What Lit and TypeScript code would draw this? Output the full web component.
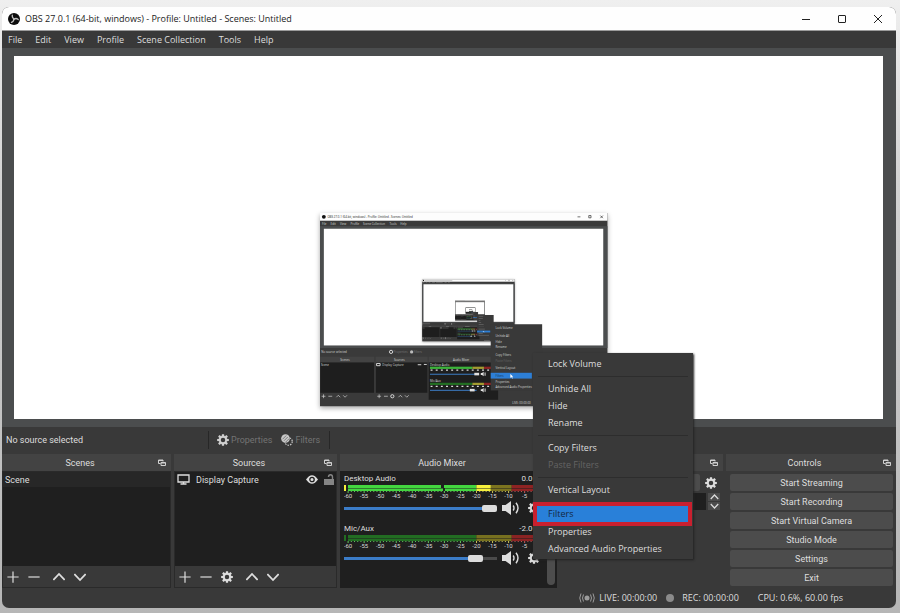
import { LitElement, html, svg, css, nothing } from "lit";
import { customElement } from "lit/decorators.js";

const gearTeeth = [0, 45, 90, 135, 180, 225, 270, 315];

const gear = (cls = "icon") => html`<svg class=${cls} viewBox="0 0 16 16" aria-hidden="true">
  <circle cx="8" cy="8" r="4.3" fill="none" stroke="currentColor" stroke-width="2.6" />
  ${gearTeeth.map((a) => svg`<path d="M6.2 3 L6.6 0.2 H9.4 L9.8 3 Z" fill="currentColor" transform="rotate(${a} 8 8)" />`)}
</svg>`;

const line = (d: string, w = 1.6) => html`<svg class="icon" viewBox="0 0 16 16" aria-hidden="true">
  <path d=${d} fill="none" stroke="currentColor" stroke-width=${w} />
</svg>`;

const plus = () => line("M8 0.5V15.5M0.5 8H15.5");
const minus = () => line("M0.5 8H15.5");
const up = () => line("M0.5 12L8 4L15.5 12", 2.4);
const down = () => line("M0.5 4L8 12L15.5 4", 2.4);

const popout = () => html`<svg class="pop" viewBox="0 0 8 8" aria-hidden="true">
  <path d="M0.5 4.5V1H5V2.5M0.5 1.5H5M0.5 4.5H2.5" fill="none" stroke="currentColor" />
  <path d="M3 3.5H7.5V6.5H3ZM3 4H7.5" fill="none" stroke="currentColor" />
</svg>`;

const speaker = () => html`<svg class="speaker" viewBox="0 0 18 14" aria-hidden="true">
  <path d="M0 4H3.5L9 0V14L3.5 10H0Z" fill="currentColor" />
  <path d="M11.2 4.5Q12.8 7 11.2 9.5M14 1.8Q18 7 14 12.2" fill="none" stroke="currentColor" stroke-width="1.4" />
</svg>`;

const logo = () => html`<svg class="logo" viewBox="0 0 24 24" aria-hidden="true">
  <circle cx="12" cy="12" r="12" fill="#0c0c0c" />
  ${[0, 120, 240].map(
    (a) => svg`<path d="M12.500 11.500C9.500 10.500 8 8 8.600 4.200" fill="none" stroke="#bdbdbd" stroke-width="2.600" stroke-linecap="round" transform="rotate(${a} 12 12)" />`
  )}
</svg>`;

/* Level meter: -60 dB sits 4px in, the scale runs to 0 dB. */
const dbX = (db: number) => 4 + (db + 60) * 3.21;
const meter = (live: boolean) => {
  const [g, y, r] = live ? ["#43d63f", "#f6f03c", "#8e2323"] : ["#226d22", "#77701f", "#8a2323"];
  const parts = live
    ? [[4, dbX(-20), g], [dbX(-20), dbX(-15.5), y], [dbX(-15.5), dbX(-9), "#7c741f"], [dbX(-9), dbX(0), r]]
    : [[4, dbX(-20), g], [dbX(-20), dbX(-9), y], [dbX(-9), dbX(0), r]];
  const ticks = Array.from({ length: 61 }, (_, i) => i);
  return html`<svg class="meter" viewBox="0 0 200 14" aria-hidden="true">
    ${parts.map(([a, b, c]) => svg`
      <rect x=${a} y="0" width=${(b as number) - (a as number)} height="3" fill=${c} />
      <rect x=${a} y="3.500" width=${(b as number) - (a as number)} height="2.500" fill=${c} />`)}
    <rect x="0" y="0" width="2" height="6" fill=${live ? "#f6f03c" : g} />
    ${live ? svg`<rect x="97" y="0" width="3" height="3" fill="#1f1f1f" /><rect x="99" y="3" width="2" height="3" fill="#1f1f1f" />` : nothing}
    ${ticks.map((i) => svg`<rect x=${dbX(i - 60) - 0.4} y="6" width="1" height=${i % 5 ? 1 : 2} fill=${i < 40 ? "#62c35f" : i < 51 ? "#c9c35a" : "#c25a5a"} />`)}
    ${ticks.filter((i) => i % 5 === 0).map((i) => svg`<text class="db" x=${dbX(i - 60)} y="13" text-anchor="middle">${i - 60}</text>`)}
  </svg>`;
};

const S = 0.3215;
const menuRows: [string, number][] = [
  ["Lock Volume", 368], ["Unhide All", 392], ["Hide", 410], ["Rename", 427], ["Copy Filters", 451],
  ["Paste Filters", 469], ["Vertical Layout", 493], ["Filters", 517], ["Properties", 535], ["Advanced Audio Properties", 552],
];

/* The captured display shows the same window again inside its own preview. */
const capture = (depth: number): unknown => {
  const label = (s: string, x: number, y: number, c = "#d6d6d6", w = s.length * 4) =>
    depth === 0
      ? svg`<text class="tiny" x=${x} y=${y} fill=${c}>${s}</text>`
      : svg`<rect x=${x} y=${y - 6} width=${w} height="4" fill=${c} opacity="0.5" />`;
  return svg`<g transform="translate(${320 - 2 * S} ${213 - 7 * S}) scale(${S})">
    <rect class="cast" x="2" y="7" width="894" height="601" fill="#3a3a3a" />
    <rect x="2" y="7" width="894" height="24" fill="#fdfdfd" />
    <circle cx="14" cy="19" r="6" fill="#111" />
    ${label("OBS 27.0.1 (64-bit, windows) - Profile: Untitled - Scenes: Untitled", 25, 23, "#222")}
    <path d="M803 19H812M838 15H845V22H838ZM874 15L882 23M882 15L874 23" stroke="#222" stroke-width="2" fill="none" />
    ${[["File", 8], ["Edit", 35], ["View", 64], ["Profile", 97], ["Scene Collection", 136], ["Tools", 218], ["Help", 252]].map(([s, x]) => label(s as string, x as number, 43))}
    <rect x="2" y="48" width="894" height="379" fill="#4b4d4e" />
    <rect x="14" y="56" width="869" height="363" fill="#fff" />
    ${label("No source selected", 6, 443)}
    ${label("Properties", 231, 443, "#777")}${label("Filters", 294, 443, "#777")}
    <circle cx="223" cy="439" r="5" fill="none" stroke="#ddd" stroke-width="3" />
    <circle cx="287" cy="439" r="5" fill="#bbb" />
    <path d="M2 454H171V471H2ZM175 454H337V471H175ZM340 454H556V471H340Z" fill="#434343" />
    ${label("Scenes", 65, 467)}${label("Sources", 232, 467)}${label("Audio Mixer", 416, 467)}
    <path d="M3 472H170V566H3ZM176 472H336V566H176ZM340 472H556V588H340Z" fill="#1e1e1e" />
    ${label("Scene", 5, 483)}${label("Display Capture", 196, 483)}
    <path d="M178 475H189V482H178ZM306 479H317M325 478H334" stroke="#ddd" stroke-width="3" fill="none" />
    <path d="M7 577H19M13 571V583M28 577H40M53 580L59 574L65 580M74 574L80 580L86 574M180 577H192M186 571V583M201 577H213M246 580L252 574L258 580M266 574L272 580L278 574" stroke="#ddd" stroke-width="2" fill="none" />
    <circle cx="227" cy="577" r="5" fill="none" stroke="#ddd" stroke-width="3" />
    ${label("Desktop Audio", 344, 482)}${label("Mic/Aux", 344, 532)}
    ${[0, 50].map((o) => svg`
      <rect x="344" y=${485 + o} width="132" height="7" fill=${o ? "#226d22" : "#3cb43a"} />
      <rect x="476" y=${485 + o} width="36" height="7" fill="#a39b30" />
      <rect x="512" y=${485 + o} width="28" height="7" fill="#8e2323" />
      <path d="M346 ${496 + o}H535" stroke="#ddd" stroke-width="4" stroke-dasharray="6 10" />
      <rect x="344" y=${507 + o} width="145" height="3" fill="#3d7fc9" />
      <rect x=${o ? 468 : 482} y=${504 + o} width="15" height="8" fill="#e2e2e2" />
      <path d="M502 ${505 + o}H506L511 ${501 + o}V${515 + o}L506 ${511 + o}H502ZM514 ${503 + o}H517V${513 + o}H514Z" fill="#e2e2e2" />`)}
    <path d="M730 474H893V491H730ZM730 493H893V510H730ZM730 512H893V529H730ZM730 531H893V548H730ZM730 550H893V567H730ZM730 569H893V586H730Z" fill="#4b4b4b" />
    ${label("LIVE: 00:00:00", 600, 602)}
    ${depth < 4 ? capture(depth + 1) : nothing}
    <rect x="533" y="353" width="160" height="206" fill="#393939" />
    <rect x="533" y="504" width="128" height="18" fill="#2d7fd6" />
    ${menuRows.map(([s, y]) => label(s, 548, y, s === "Paste Filters" ? "#666" : s === "Filters" ? "#16324f" : "#d6d6d6"))}
    <path d="M594 508V520L597 517L600 522L602 521L599 516H603Z" fill="#fff" />
  </g>`;
};

@customElement("app-root")
export class AppRoot extends LitElement {
  static styles = css`
    :host { display: block; min-height: 100vh; box-sizing: border-box; padding: 7px 4px 5px 2px;
      background: linear-gradient(#efefef, #d2d2d2 30%, #b6b6b6);
      font-family: "Open Sans", "Noto Sans", sans-serif; font-size: 9px; line-height: 12px; color: #dedede; }
    * { box-sizing: border-box; }
    button, input, select { font: inherit; color: inherit; border: 0; padding: 0; margin: 0; background: none; }
    svg { display: block; flex: none; }
    ul { list-style: none; margin: 0; padding: 0; }
    h2 { margin: 0; font: inherit; }
    .window { position: relative; display: flex; flex-direction: column; min-height: calc(100vh - 12px);
      background: #393939; border-radius: 7px; }
    .titlebar { display: flex; align-items: center; height: 24px; padding: 0 13px 0 6px; background: #fefefe; color: #1b1b1b;
      border-radius: 7px 7px 0 0; border-bottom: 1px solid #9c9c9c; }
    .logo { width: 12px; height: 12px; margin-right: 5px; }
    .title { flex: 1; }
    .caption { display: flex; gap: 26px; }
    .caption button, .caption svg { width: 10px; height: 10px; }
    .menubar { display: flex; gap: 13px; height: 17px; padding: 0 6px; align-items: center; }
    .preview { flex: 1; display: flex; padding: 8px 13px 8px 12px; background: #4b4d4e; }
    .canvas { flex: 1; min-height: 0; background: #fff; }
    .canvas svg { width: 100%; height: 100%; }
    .tiny { font-size: 9px; }
    .cast { filter: drop-shadow(0 6px 8px rgba(0, 0, 0, 0.35)); }
    .context, .docks { font-family: Roboto, "Open Sans", sans-serif; }
    .context { display: flex; align-items: center; height: 27px; padding: 0 4px 2px; }
    .context .status { width: 202px; }
    .tools { display: flex; gap: 9px; align-items: center; height: 18px; padding: 0 9px 0 8px;
      border: solid #272727; border-width: 0 1px; }
    .tools button { display: flex; align-items: center; gap: 2px; color: #737373; }
    .icon { width: 12px; height: 12px; }
    .tools .icon { color: #d0d0d0; }
    .docks { display: grid; grid-template-columns: 169fr 163fr 217fr 163fr 170fr; gap: 3px; }
    .dock { display: flex; flex-direction: column; min-width: 0; }
    .head { display: flex; align-items: center; height: 17px; padding: 0 5px 0 0; background: #434343; }
    .head h2 { flex: 1; text-align: center; }
    .pop { width: 8px; height: 8px; color: #d0d0d0; }
    .body { flex: 1; display: flex; flex-direction: column; min-height: 117px; }
    .framed { border: 1px solid #2a2a2a; }
    .list { flex: 1; background: #1f1f1f; }
    .list li { display: flex; align-items: center; height: 15px; padding: 0 2px; }
    .picked { background: #272727; }
    .source { gap: 6px; }
    .source span { flex: 1; }
    .monitor { width: 13px; height: 11px; }
    .eye { width: 12px; height: 9px; }
    .lock { width: 10px; height: 11px; color: #858585; }
    .foot { display: flex; align-items: center; gap: 9px; height: 21px; padding: 0 4px; }
    .foot button { width: 12px; height: 12px; }
    .foot .gap { margin-left: 4px; }
    .mixer { flex-direction: row; background: #1f1f1f; padding: 2px 2px 0 4px; }
    .strips { flex: 1; display: flex; flex-direction: column; gap: 3px; min-width: 0; }
    .strip { height: 47px; }
    .names { display: flex; justify-content: space-between; width: 200px; font-size: 8px; line-height: 12px; }
    .meter { width: 200px; height: 14px; }
    .db { font-size: 6px; fill: #d8d8d8; }
    .fader { display: flex; align-items: center; height: 18px; }
    .fader input { flex: none; appearance: none; width: 153px; height: 8px; margin-right: 5px;
      background: linear-gradient(90deg, #3b7cc8 var(--level), #4a4a4a var(--level)) center / 100% 3px no-repeat; }
    .fader input::-webkit-slider-thumb { appearance: none; width: 15px; height: 7px; border-radius: 2px; background: #dcdcdc; }
    .fader button { flex: none; }
    .fader button + button { margin-left: 8px; }
    .speaker { width: 18px; height: 14px; }
    .bar { width: 8px; border-radius: 4px; margin: 0 0 3px; background: #4d4d4d; }
    .transitions { padding: 3px; gap: 2px; }
    .trow { display: flex; gap: 5px; align-items: center; height: 17px; }
    .pick { padding-right: 3px; }
    .trow select { flex: 1; min-width: 0; height: 17px; background: #4c4c4c; border-radius: 2px; appearance: none; }
    .trow label { width: 48px; }
    .trow input { flex: 1; min-width: 0; height: 17px; background: #1f1f1f; }
    .spin { display: flex; flex-direction: column; gap: 1px; margin-left: -3px; }
    .spin button { display: flex; justify-content: center; width: 12px; height: 8px; background: #4c4c4c; }
    .spin svg { width: 9px; height: 8px; }
    .controls { padding: 3px 3px 2px 4px; gap: 2px; }
    .controls button { height: 17px; background: #4c4c4c; border-radius: 2px; }
    .statusbar { display: flex; justify-content: flex-end; align-items: center; height: 20px; padding-right: 53px; }
    .statusbar span { display: flex; align-items: center; margin-left: 19px; }
    .statusbar .rec { margin-left: 9px; }
    .live { width: 16px; height: 10px; margin-right: 4px; color: #9c9c9c; }
    .dot { width: 8px; height: 8px; margin-right: 8px; border-radius: 50%; background: #8b8b8b; }
    .popup { position: absolute; left: 531px; top: 346px; width: 160px; padding: 2px 0; background: #393939;
      box-shadow: 1px 1px 2px #222; }
    .popup button { display: block; width: 100%; height: 17px; padding: 0 15px; text-align: left; }
    .popup hr { height: 1px; margin: 4px 5px 3px; border: 0; background: #2d2d2d; }
    .popup button:disabled { color: #646464; }
    .popup .hot { width: calc(100% - 9px); height: 16px; margin: 0 5px 1px 4px; padding: 0 11px; background: #2980d9;
      color: #14283f; outline: 4px solid #c9202f; }
  `;

  private dock(title: string, body: unknown) {
    return html`<section class="dock">
      <header class="head"><h2>${title}</h2>${popout()}</header>
      ${body}
    </section>`;
  }

  private strip(name: string, db: string, live: boolean, level: number) {
    return html`<div class="strip">
      <div class="names"><span>${name}</span><span>${db}</span></div>
      ${meter(live)}
      <div class="fader">
        <input type="range" min="0" max="100" .value=${String(level)} aria-label="${name} volume" style="--level:${level}%" />
        <button aria-label="Mute ${name}">${speaker()}</button>
        <button aria-label="${name} settings">${gear()}</button>
      </div>
    </div>`;
  }

  render() {
    return html`<main class="window">
      <header class="titlebar">
        ${logo()}<span class="title">OBS 27.0.1 (64-bit, windows) - Profile: Untitled - Scenes: Untitled</span>
        <div class="caption">
          <button aria-label="Minimize"><svg viewBox="0 0 10 10"><path d="M1 5.500H9" stroke="#222" /></svg></button>
          <button aria-label="Maximize"><svg viewBox="0 0 10 10"><rect x="1.500" y="1.500" width="7" height="7" rx="0.500" fill="none" stroke="#222" /></svg></button>
          <button aria-label="Close"><svg viewBox="0 0 10 10"><path d="M1 1L9 9M9 1L1 9" stroke="#222" /></svg></button>
        </div>
      </header>
      <nav class="menubar">
        ${["File", "Edit", "View", "Profile", "Scene Collection", "Tools", "Help"].map((m) => html`<button>${m}</button>`)}
      </nav>
      <div class="preview"><div class="canvas">
        <svg viewBox="14 56 869 363" aria-hidden="true">${capture(0)}</svg>
      </div></div>
      <div class="context">
        <span class="status">No source selected</span>
        <div class="tools">
          <button>${gear()}Properties</button>
          <button><svg class="icon" viewBox="0 0 16 16" aria-hidden="true">
            <circle cx="10" cy="10" r="5" fill="none" stroke="currentColor" stroke-width="1.500" stroke-dasharray="2 1.500" />
            <circle cx="6" cy="6" r="5.800" fill="#c8c8c8" />
            <path d="M2 7L7 2M4 9L9 4M6 11L11 6" stroke="#555" stroke-width="0.900" />
          </svg>Filters</button>
        </div>
      </div>
      <div class="docks">
        ${this.dock("Scenes", html`<div class="body framed">
          <ul class="list"><li class="picked">Scene</li></ul>
          <div class="foot">
            <button aria-label="Add scene">${plus()}</button>
            <button aria-label="Remove scene">${minus()}</button>
            <button class="gap" aria-label="Move scene up">${up()}</button>
            <button aria-label="Move scene down">${down()}</button>
          </div></div>`)}
        ${this.dock("Sources", html`<div class="body framed">
          <ul class="list"><li class="source">
            <svg class="monitor" viewBox="0 0 13 11" aria-hidden="true"><path d="M1 1H12V8H1ZM3.500 10H9.500M6.500 8V10" fill="none" stroke="currentColor" stroke-width="1.300" /></svg>
            <span>Display Capture</span>
            <svg class="eye" viewBox="0 0 12 9" aria-hidden="true"><path d="M0 4.500Q6 -4 12 4.500Q6 13 0 4.500Z" fill="currentColor" /><circle cx="6" cy="4.500" r="2.200" fill="none" stroke="#1f1f1f" stroke-width="1.300" /></svg>
            <svg class="lock" viewBox="0 0 10 11" aria-hidden="true"><path d="M0 5H10V11H0Z" fill="currentColor" /><path d="M8.500 5V3Q8.500 0.800 6.500 0.800Q4.500 0.800 4.500 3" fill="none" stroke="currentColor" stroke-width="1.400" /></svg>
          </li></ul>
          <div class="foot">
            <button aria-label="Add source">${plus()}</button>
            <button aria-label="Remove source">${minus()}</button>
            <button aria-label="Source properties">${gear()}</button>
            <button class="gap" aria-label="Move source up">${up()}</button>
            <button aria-label="Move source down">${down()}</button>
          </div></div>`)}
        ${this.dock("Audio Mixer", html`<div class="body mixer">
          <div class="strips">
            ${this.strip("Desktop Audio", "0.0 dB", true, 100)}
            ${this.strip("Mic/Aux", "-2.0 dB", false, 90)}
          </div>
          <div class="bar"></div></div>`)}
        ${this.dock("Scene Transitions", html`<div class="body transitions">
          <div class="trow pick">
            <select aria-label="Transition"><option>Fade</option></select>
            <button aria-label="Transition properties">${gear()}</button>
          </div>
          <div class="trow">
            <label for="duration">Duration</label><input id="duration" value="300 ms" />
            <div class="spin"><button aria-label="Increase">${up()}</button><button aria-label="Decrease">${down()}</button></div>
          </div></div>`)}
        ${this.dock("Controls", html`<div class="body controls">
          ${["Start Streaming", "Start Recording", "Start Virtual Camera", "Studio Mode", "Settings", "Exit"].map((b) => html`<button>${b}</button>`)}
        </div>`)}
      </div>
      <footer class="statusbar">
        <span><svg class="live" viewBox="0 0 16 10" aria-hidden="true"><circle cx="8" cy="5" r="2.500" fill="currentColor" />
          <path d="M4.500 1.500Q2.500 5 4.500 8.500M11.500 1.500Q13.500 5 11.500 8.500M2 0.500Q-0.500 5 2 9.500M14 0.500Q16.500 5 14 9.500" fill="none" stroke="currentColor" /></svg>LIVE: 00:00:00</span>
        <span class="rec"><i class="dot"></i>REC: 00:00:00</span>
        <span>CPU: 0.6%, 60.00 fps</span>
      </footer>
      <div class="popup">
        <button>Lock Volume</button><hr />
        <button>Unhide All</button><button>Hide</button><button>Rename</button><hr />
        <button>Copy Filters</button><button disabled>Paste Filters</button><hr />
        <button>Vertical Layout</button><hr />
        <button class="hot">Filters</button><button>Properties</button><button>Advanced Audio Properties</button>
      </div>
    </main>`;
  }
}
